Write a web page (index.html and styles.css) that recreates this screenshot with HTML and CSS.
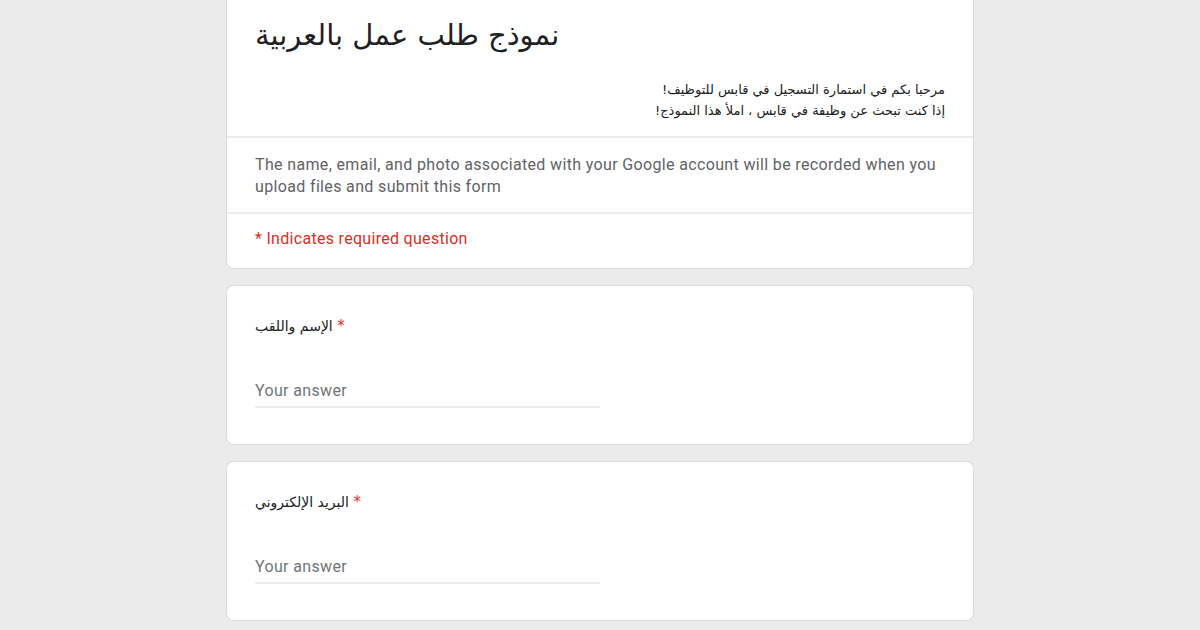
FILE: index.html
```html
<!DOCTYPE html>
<html lang="ar">
<head>
<meta charset="utf-8">
<title>نموذج طلب عمل بالعربية</title>
<link rel="stylesheet" href="styles.css">
</head>
<body>
<main class="form">
  <section class="card header-card">
    <div class="header-top">
      <h1 class="title">نموذج طلب عمل بالعربية</h1>
      <div class="desc" dir="rtl">
        <p>مرحبا بكم في استمارة التسجيل في قابس للتوظيف!</p>
        <p>إذا كنت تبحث عن وظيفة في قابس ، املأ هذا النموذج!</p>
      </div>
    </div>
    <div class="notice">The name, email, and photo associated with your Google account will be recorded when you upload files and submit this form</div>
    <div class="required-note">* Indicates required question</div>
  </section>

  <section class="card question">
    <div class="q-label" dir="ltr"><span class="q-text">الإسم واللقب</span> <span class="star">*</span></div>
    <div class="answer">Your answer</div>
  </section>

  <section class="card question">
    <div class="q-label" dir="ltr"><span class="q-text">البريد الإلكتروني</span> <span class="star">*</span></div>
    <div class="answer">Your answer</div>
  </section>
</main>
</body>
</html>
```

FILE: styles.css
```css
html, body {
  margin: 0;
  padding: 0;
}
body {
  background: #ebebeb;
  font-family: Roboto, "Liberation Sans", "DejaVu Sans", sans-serif;
  color: #202124;
  overflow: hidden;
}
.form {
  width: 748px;
  margin: -12px auto 0;
  display: flex;
  flex-direction: column;
  gap: 16px;
}
.card {
  background: #fff;
  border: 1px solid #dadce0;
  border-radius: 8px;
  box-sizing: border-box;
}
.header-top {
  padding: 22px 28px 15px 28px;
  border-bottom: 2px solid #ececec;
}
.title {
  margin: 0;
  font-family: "DejaVu Sans", "Liberation Sans", sans-serif;
  font-weight: normal;
  font-size: 29px;
  line-height: 48px;
  text-align: left;
  color: #202124;
}
.desc {
  margin-top: 20px;
  font-family: "DejaVu Sans", "Liberation Sans", sans-serif;
  font-size: 13px;
  line-height: 21px;
  color: #202124;
  text-align: right;
}
.desc p {
  margin: 0;
}
.notice {
  padding: 16px 28px 14px 28px;
  font-size: 16px;
  line-height: 22px;
  letter-spacing: 0.35px;
  color: #5f6368;
  border-bottom: 2px solid #ececec;
}
.required-note {
  padding: 14px 28px 18px 28px;
  font-size: 16px;
  line-height: 22px;
  letter-spacing: 0.3px;
  color: #d93025;
}
.question {
  height: 160px;
  padding: 28px 28px 0 28px;
}
.q-label {
  font-family: "DejaVu Sans", "Liberation Sans", sans-serif;
  font-size: 14px;
  line-height: 24px;
  color: #202124;
  text-align: left;
}
.star {
  color: #d93025;
  font-size: 15px;
}
.answer {
  margin-top: 41px;
  width: 345px;
  font-size: 16px;
  line-height: 24px;
  letter-spacing: 0.35px;
  color: #70757a;
  padding-bottom: 3px;
  border-bottom: 2px solid #ececec;
}
```
